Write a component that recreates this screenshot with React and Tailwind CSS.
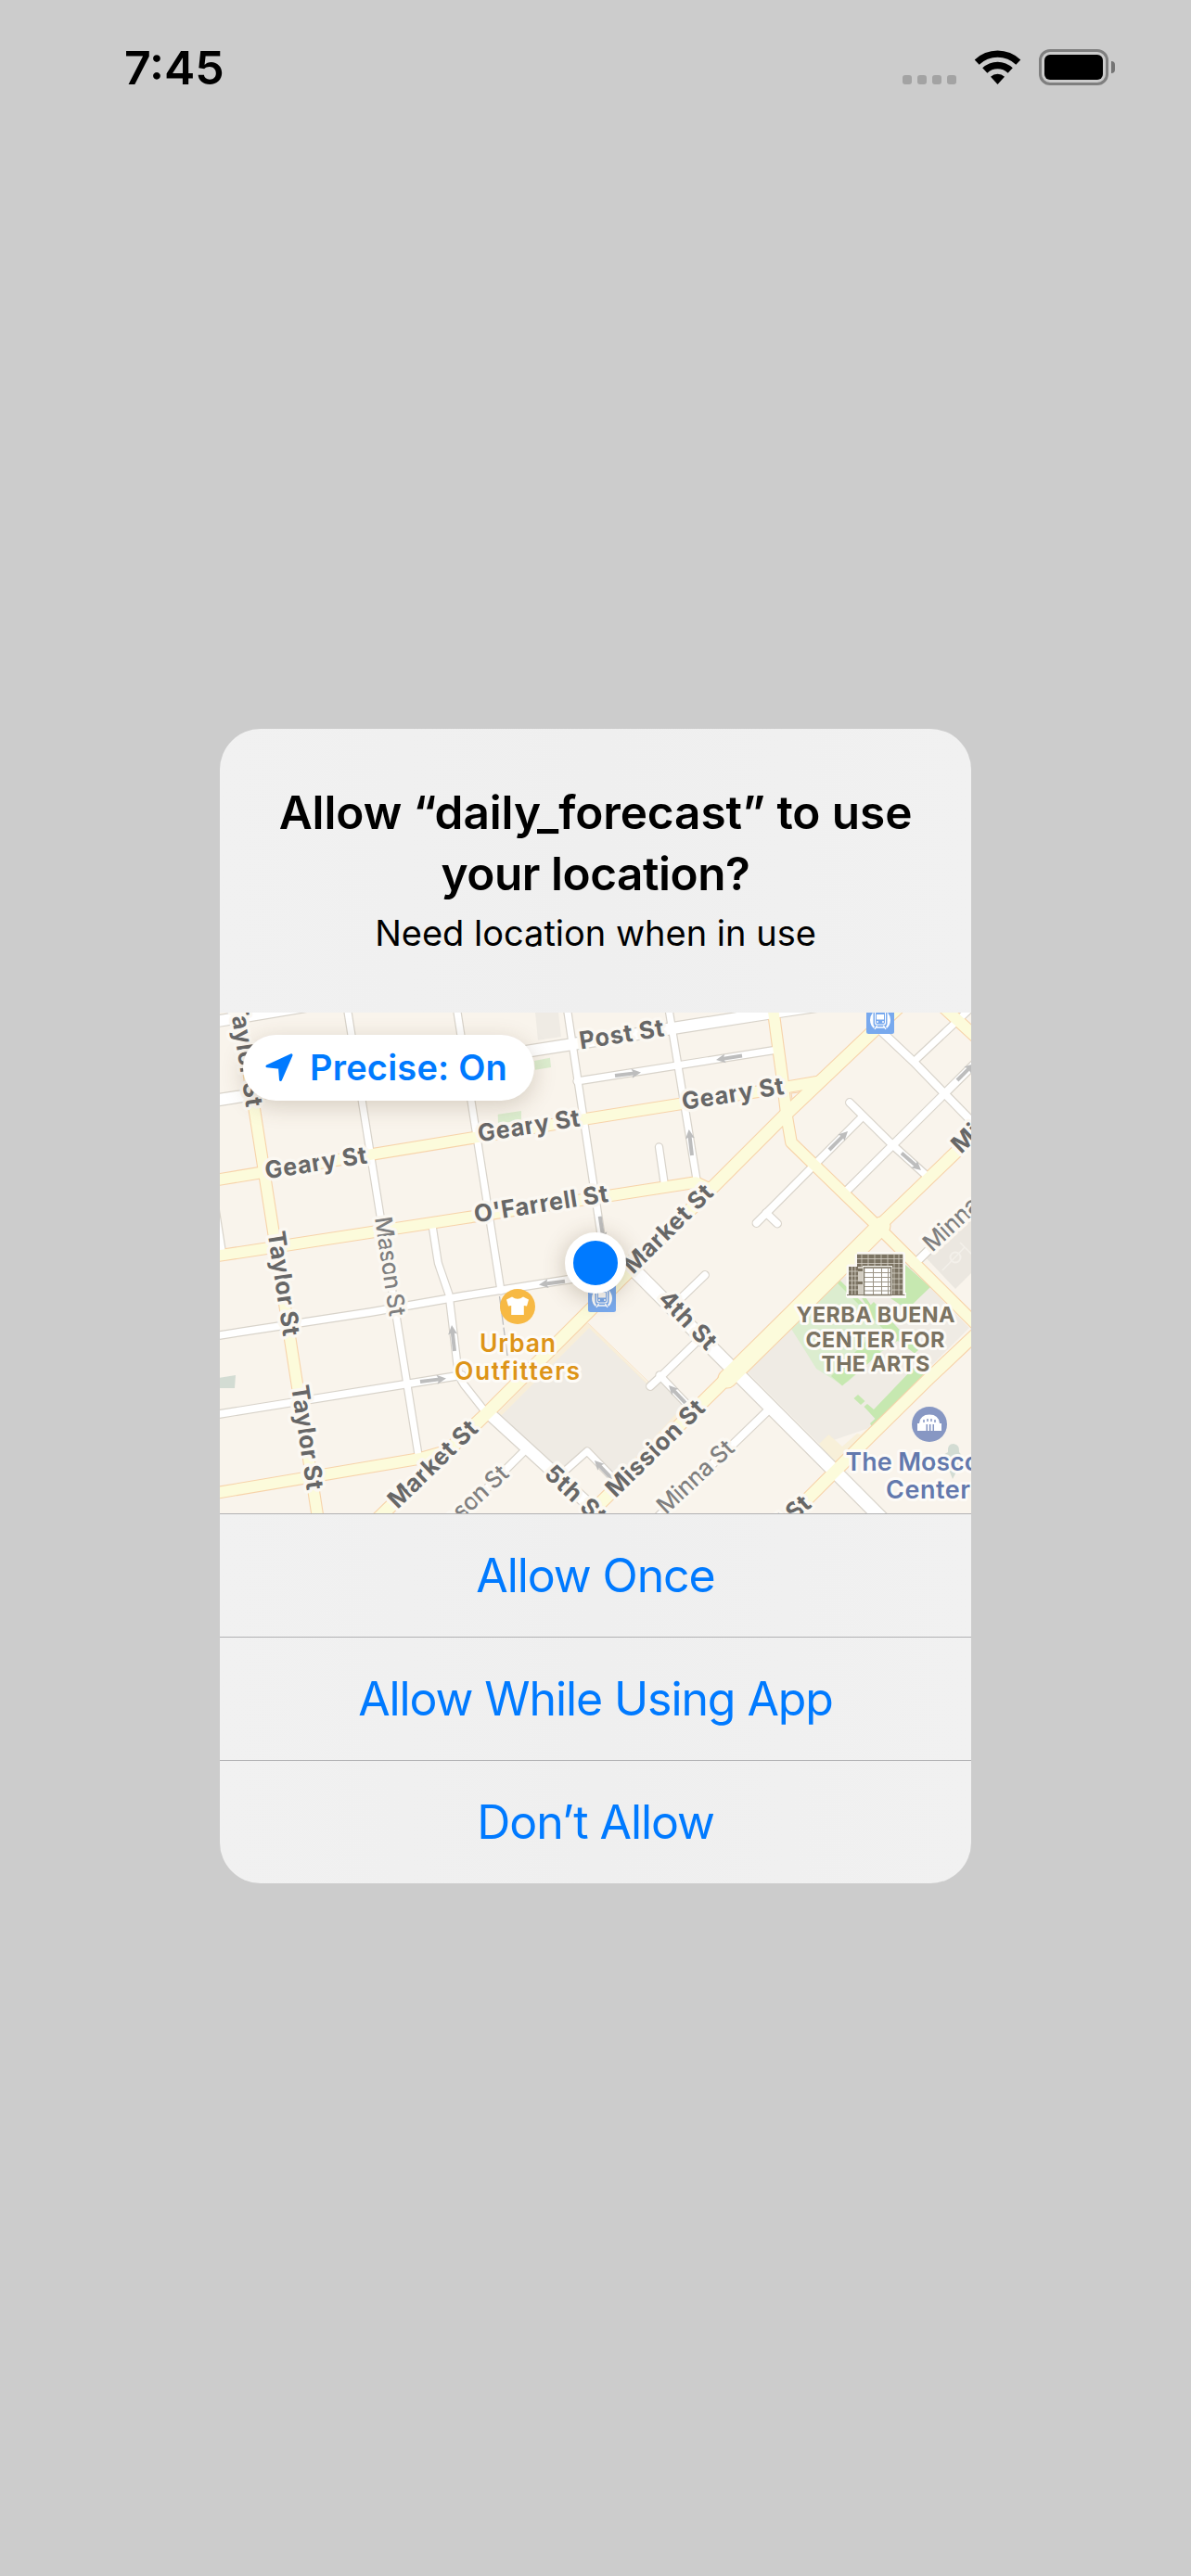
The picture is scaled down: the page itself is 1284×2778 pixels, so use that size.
const FONT = "font-['Inter','Liberation_Sans',sans-serif]";

// Road geometry: [path, fill width]
const WHITE_ROADS = [
  ["M230 1102 L340 1083.5", 11.5],
  ["M230 1187 L846 1090 L900 1082", 12],
  ["M374 1085 L451.5 1572", 7],
  ["M492 1085 L540 1392", 7],
  ["M465.5 1318 L471.5 1357 Q472 1362 474 1367 L484 1396 L487.5 1425 L493 1472 Q494 1485 500 1493 L526 1526", 7],
  ["M528 1525 L656 1642", 12.5],
  ["M611 1085 L624 1172 L650 1345 L655 1372", 7],
  ["M720.5 1085 L751 1272", 7],
  ["M622 1166 L838 1132", 7],
  ["M230 1441 L400 1415 L500 1397.5 L650 1374", 7.5],
  ["M230 1526 L498 1483", 7.5],
  ["M230 1290 L240 1354", 7],
  ["M710.5 1237 L716 1275", 7],
  ["M948 1110 L985 1145 L1054 1216", 8],
  ["M985 1145 L1050 1084", 7],
  ["M911 1286 L1054 1144", 8],
  ["M916 1189 L962.5 1235 L999 1268", 7.5],
  ["M930 1204 L815.5 1319", 7.5],
  ["M826 1308 L838 1319.5", 7.5],
  ["M675 1361 L955 1642", 14],
  ["M760 1375 L731 1403", 7.5],
  ["M749 1449 L714 1483 L701 1495", 7.5],
  ["M711 1483 L746 1520", 7],
  ["M606 1589 L633 1565 L664 1597", 7],
  ["M564 1566 L490 1640", 7.5],
  ["M827 1522 L705 1640", 8],
  ["M985 1364 L1054 1296", 8],
];

const YELLOW_ROADS = [
  ["M257 1085 L343.5 1642", 11.5],
  ["M230 1273 L510 1227 L633 1206.5 L850 1172 L885 1166", 11.5],
  ["M230 1355 L500 1313.5 L660 1289 L750 1275 L765 1282", 11.5],
  ["M833 1085 L843 1160 L848 1203 L853 1232 L946.7 1323 L1056 1432", 11.5],
  ["M972 1083 L846.7 1202 L527 1522 L404 1641", 13],
  ["M1056 1218 L946 1324 L905 1367", 12.5],
  ["M950 1322 L853 1419 L784 1487", 19],
  ["M790 1480 L630 1638", 13],
  ["M1056 1435 L1000 1488 L937 1550 L846 1641", 12.5],
  ["M230 1610.5 L452 1573 L480 1565", 11.5],
  ["M1017 1086 L1054 1120", 12],
];

const ARROWS = [
  [663, 1160, 691, 1156.5],
  [800, 1138.5, 772, 1143],
  [746, 1246, 742.7, 1218],
  [646.7, 1311.7, 651, 1339],
  [894, 1240, 914, 1220],
  [972, 1243.5, 993, 1262],
  [1032, 1165, 1050, 1147],
  [490, 1457, 487, 1429],
  [453, 1490, 481, 1486.5],
  [609, 1381.7, 581, 1385.5],
  [739, 1513, 721, 1494],
  [660, 1595, 641, 1575],
];

// [text, x, y, angle, length, minor, anchor]
const STREET_LABELS = [
  ["Taylor St", 247.5, 1081, 81, 115],
  ["Taylor St", 288.5, 1329, 81.5, 114],
  ["Taylor St", 314, 1495, 81.5, 114],
  ["Mason St", 404, 1313.5, 81.5, 108, true],
  ["Geary St", 287, 1271.5, -9, 111],
  ["Geary St", 516.5, 1231.5, -9, 111],
  ["Geary St", 736.5, 1197, -9, 111],
  ["Post St", 626, 1131.5, -9, 92],
  ["O'Farrell St", 512.5, 1318.5, -9, 146],
  ["Market St", 682.5, 1375, -44.7, 124],
  ["Market St", 428.5, 1628, -44, 123],
  ["4th St", 708.5, 1402, 46, 77],
  ["5th St", 585.5, 1591, 43, 80],
  ["Mission St", 663.5, 1616, -44.3, 137],
  ["Mission St", 1036, 1245, -44, 137],
  ["Minna St", 718, 1634, -43, 103, true],
  ["Minna St", 1005, 1351, -43, 103, true],
  ["Stevenson St", 550, 1591, -43, 150, true, "end"],
  ["Howard St", 876, 1624, -42, 126, false, "end"],
];

const PLACE_LABELS = [
  ["Urban", 558, 1457.5, 82, 26.5, "#dd9417", 600],
  ["Outfitters", 557.5, 1488, 135, 26.5, "#dd9417", 600],
  ["YERBA BUENA", 944, 1425.7, 171, 23.5, "#7b7362", 700],
  ["CENTER FOR", 943.5, 1452.5, 150, 23.5, "#7b7362", 700],
  ["THE ARTS", 944, 1479, 117, 23.5, "#7b7362", 700],
  ["The Moscone", 1000, 1585.5, 177, 27, "#6379ad", 600],
  ["Center", 1000.5, 1616, 91, 27, "#6379ad", 600],
];

function Roads({ roads, extra, color }) {
  return roads.map(([d, w], i) => (
    <path key={i} d={d} fill="none" stroke={color} strokeWidth={w + extra} strokeLinecap="round" strokeLinejoin="round" />
  ));
}

function Arrow({ points: [x1, y1, x2, y2] }) {
  const angle = (Math.atan2(y2 - y1, x2 - x1) * 180) / Math.PI;
  const length = Math.hypot(x2 - x1, y2 - y1);
  return (
    <g transform={`translate(${x1} ${y1}) rotate(${angle})`} fill="#bdbdbd">
      <rect x="0" y="-2" width={length - 7} height="4" />
      <path d={`M${length} 0 L${length - 10} -5 L${length - 8} 0 L${length - 10} 5 Z`} />
    </g>
  );
}

function TransitIcon({ x, y }) {
  return (
    <g transform={`translate(${x} ${y})`}>
      <rect width="30" height="30" rx="2.5" fill="#78a9ee" />
      <path d="M9.500 4.500 Q4 9 4 15 Q4 21 9.500 25.500 H20.500 Q26 21 26 15 Q26 9 20.500 4.500 Z" fill="#fff" />
      <path d="M11.500 3.500 H18.500 Q22.500 4 22.500 8 V19 Q22.500 21 21 22 L23.500 27 H6.500 L9 22 Q7.500 21 7.500 19 V8 Q7.500 4 11.500 3.500 Z" fill="#78a9ee" />
      <rect x="9" y="5" width="12" height="15.500" rx="2.500" fill="#fff" />
      <rect x="10" y="6.200" width="10" height="13.200" rx="1.800" fill="#78a9ee" />
      <rect x="11" y="9" width="8" height="5.500" fill="#fff" />
      <circle cx="12" cy="17" r="1" fill="#fff" />
      <circle cx="18" cy="17" r="1" fill="#fff" />
      <path d="M11.500 21 L9 25 M18.500 21 L21 25 M10.500 23 H19.500" stroke="#fff" strokeWidth="1.400" />
    </g>
  );
}

function Building() {
  return (
    <g>
      <path d="M924 1352.500 H973.500 V1396.500 H977 M924 1352.500 V1366 H915 V1396.500 H912" fill="none" stroke="#fbf9f5" strokeWidth="5" strokeLinejoin="round" />
      <rect x="913" y="1396" width="64" height="4" fill="#fbf9f5" />
      <rect x="924" y="1352.700" width="49.300" height="44" fill="#7b7362" />
      <rect x="915" y="1366" width="10" height="30.500" fill="#7b7362" />
      <path d="M924 1357.500 H973 M924 1362.500 H973 M962 1367.500 H973 M962 1373 H973 M962 1379 H973 M962 1385 H973 M962 1391 H973 M929 1353 V1366 M936 1353 V1366 M943 1353 V1366 M950 1353 V1366 M957 1353 V1366 M964 1353 V1396 M969 1353 V1396 M915 1371 H925 M915 1376 H925 M915 1381 H925 M915 1386 H925 M915 1391 H925 M918.500 1366 V1396 M922 1366 V1396" stroke="#d5d0c5" strokeWidth="0.800" fill="none" />
      <rect x="925" y="1366" width="6" height="30.500" fill="#d2cdc2" />
      <rect x="925" y="1368" width="5" height="3" fill="#7b7362" />
      <rect x="925" y="1382" width="5" height="3" fill="#7b7362" />
      <rect x="930" y="1365" width="32" height="31.500" fill="#f6f4ef" />
      <rect x="931.500" y="1367" width="29" height="29.500" fill="#fff" stroke="#7b7362" strokeWidth="1.500" />
      <path d="M932 1372.500 H960 M932 1377.500 H960 M932 1382.500 H960 M932 1387.500 H960 M932 1392 H960 M941.500 1367 V1396 M950.500 1367 V1396 M957.500 1367 V1396" stroke="#9b9486" strokeWidth="1" fill="none" />
      <rect x="913" y="1396" width="62.500" height="1" fill="#7b7362" />
    </g>
  );
}

function StreetMap() {
  return (
    <svg className={`block h-full w-full ${FONT}`} viewBox="237 1092 810 540">
      <rect x="237" y="1092" width="810" height="540" fill="#f9f4ec" />

      {/* Blocks, buildings and parks */}
      <path d="M577 1092 H602 L605 1118 L580 1121.700 Z" fill="#efebe4" />
      <path d="M576 1144 L593 1140.700 L594 1151 L577 1153.700 Z M536.700 1201.700 L562 1198 V1208.500 L537 1211.500 Z" fill="#dcedcf" />
      <path d="M237 1485.700 L254 1483 L253 1497 H237 Z" fill="#d3dcd3" />
      <path d="M632 1425 L700 1493 L714 1484 L742 1515 L662 1600 L633 1563 L600 1588 L535 1526 Z" fill="#f8eed8" />
      <path d="M635 1432 L700 1495 L712 1488 L738 1515 L662 1596 L633 1568 L604 1587 L540 1527 Z" fill="#efebe4" />
      <path d="M634 1427 L701 1492" stroke="#fae3c6" strokeWidth="1" />
      <path d="M853 1430 L905 1378 L977 1362 L1045 1432 L937 1540 L884 1558 L805 1479 Z" fill="#efebe4" />
      <path d="M883 1557 L893.500 1547 L908 1560 L924 1546 L928 1547 L944 1533 L946 1538 L900 1580 Z" fill="#f8f0d9" />
      <path d="M905 1381 L985 1462 L907 1493 L880 1476 L867 1455 L853 1433 Z" fill="#dcedcf" />
      <path d="M904 1382 L954 1432 M918 1380 L945 1420" stroke="#c6e8b0" strokeWidth="4" />
      <path d="M976 1364 L1003 1388 L978 1412 L960 1400 Z" fill="#c6e8b0" />
      <path d="M934 1412 L942 1404 L990 1456 L982 1463 Z" fill="#c6e8b0" />
      <path d="M896 1484 L934 1446 L950 1458 L908 1494.500 Z" fill="#c6e8b0" />
      <path d="M950 1458 L968 1446 L1000 1470 L985 1476 L943 1518 L925 1504 L912 1492 Z" fill="#efebe4" />
      <path d="M1002 1476 L940 1538.500 L938 1535 L943.500 1530 L931.500 1517 L935 1514 L942 1520 L985 1475 Z" fill="#c6e8b0" />
      <path d="M925 1504 L932.500 1511 L928 1515 L920.500 1508 Z" fill="#c6e8b0" />
      <path d="M997 1355 L1030 1390 L1050 1370 V1306 Z" fill="#ebe7e0" />
      <path d="M1035 1340 L1050 1355 M1016 1370 L1040 1345" stroke="#f3f0ea" strokeWidth="1.500" />
      <circle cx="1030" cy="1356" r="5.500" fill="none" stroke="#f3f0ea" strokeWidth="2" />
      <path d="M1016.700 1569 L1022 1566 Q1021 1557 1028 1557 Q1035 1558 1034 1566 L1039 1572 L1027 1595 Z" fill="#d3dcd3" />
      <path d="M538.500 1398 L547 1462" stroke="#bdbdbd" strokeWidth="1.300" strokeDasharray="14 3" />

      {/* Road casings, then road surfaces */}
      <Roads roads={WHITE_ROADS} extra={2.4} color="#d8d3ca" />
      <Roads roads={YELLOW_ROADS} extra={2.2} color="#f7d3aa" />
      <Roads roads={WHITE_ROADS} extra={0} color="#ffffff" />
      <Roads roads={YELLOW_ROADS} extra={0} color="#fcfbdb" />
      <path d="M853 1179 L862 1178 L854 1185 Z" fill="#f9f4ec" stroke="#f7d3aa" strokeWidth="1" />

      {ARROWS.map((points, i) => (
        <Arrow key={i} points={points} />
      ))}

      {STREET_LABELS.map(([text, x, y, angle, length, minor, anchor], i) => (
        <text
          key={i}
          transform={`translate(${x} ${y}) rotate(${angle})`}
          textLength={length}
          textAnchor={anchor || "start"}
          fontSize={minor ? 25.5 : 26}
          fontWeight={minor ? 450 : 680}
          fill={minor ? "#7f7f7f" : "#676767"}
          stroke="#fbf8f2"
          strokeWidth="7"
          strokeLinejoin="round"
          paintOrder="stroke"
        >
          {text}
        </text>
      ))}

      <TransitIcon x={934} y={1085} />
      <TransitIcon x={634} y={1385} />

      <circle cx="558" cy="1409" r="19" fill="#f7b944" />
      <path d="M552 1398.500 Q558 1403 564 1398.500 L570 1401.500 L568 1408.500 L564.800 1408 V1418 H551.200 V1408 L548 1408.500 L546 1401.500 Z" fill="#fff" />

      <circle cx="1002" cy="1536" r="19" fill="#8797c3" />
      <path d="M989 1543 V1535 H991 Q992 1525.500 1002 1525.500 Q1012 1525.500 1013 1535 H1015 V1543 H1007 V1536 H1005.500 V1543 H1003.500 V1536 H1001.800 V1543 H1000 V1536 H998.500 V1543 Z" fill="#fff" />
      <path d="M996 1531 V1534 M1000 1530 V1533 M1004 1530 V1533 M1008 1531 V1534" stroke="#8797c3" strokeWidth="1.500" />

      <Building />

      {PLACE_LABELS.map(([text, x, y, length, size, color, weight], i) => (
        <text
          key={i}
          x={x}
          y={y}
          textLength={length}
          textAnchor="middle"
          fontSize={size}
          fontWeight={weight}
          fill={color}
          stroke="#fdfbf7"
          strokeWidth="6"
          strokeLinejoin="round"
          paintOrder="stroke"
        >
          {text}
        </text>
      ))}
    </svg>
  );
}

function StatusBar() {
  return (
    <header className="flex h-[140px] items-start justify-between pl-[134px] pr-[82px] pt-[43px]">
      <div className="text-[50px] font-semibold leading-[60px]">7:45</div>
      <div className="flex items-start pt-[10px]">
        <div className="mt-[28px] flex gap-[6px]">
          {[0, 1, 2, 3].map((i) => (
            <span key={i} className="size-[10px] rounded-[3px] bg-[#a3a3a3]" />
          ))}
        </div>
        <svg className="ml-[19px] mt-px h-[37px] w-[51px]" viewBox="0 0 51 37">
          <path d="M0.700 10.500 A35.500 35.500 0 0 1 50.300 10.500 L45.300 15.800 A28.300 28.300 0 0 0 5.700 15.800 Z" />
          <path d="M9.200 19.300 A23.500 23.500 0 0 1 41.800 19.300 L36.600 24.700 A16 16 0 0 0 14.400 24.700 Z" />
          <path d="M18 28.800 A10.800 10.800 0 0 1 33 28.800 L25.500 37 Z" />
        </svg>
        <div className="ml-[19px] flex items-center">
          <div className="h-[39px] w-[75px] rounded-[12px] border-[3px] border-[#7f7f7f] p-[3px]">
            <div className="h-full rounded-[6px] bg-black" />
          </div>
          <div className="ml-[3px] h-[13px] w-[4px] rounded-r-full bg-[#747474]" />
        </div>
      </div>
    </header>
  );
}

function AlertButton({ children }) {
  return (
    <button className="h-[133px] w-full border-t border-[#b1b1b3] text-[50px] leading-[60px] tracking-[-1.1px] text-[#007aff]">
      {children}
    </button>
  );
}

export default function App() {
  return (
    <div className={`flex h-[2778px] w-[1284px] flex-col overflow-hidden bg-[#cccccc] text-black ${FONT}`}>
      <StatusBar />
      <main className="mx-auto mt-[646px] flex h-[1245px] w-[810px] flex-col overflow-hidden rounded-[44px] bg-linear-to-r from-[#f1f1f1] via-[#efefef] to-[#f1f1f1]">
        <div className="h-[306px] pt-[57px] text-center">
          <h1 className="text-[49.5px] font-semibold leading-[66px]">
            <span className="block tracking-[-0.08px]">Allow “daily_forecast” to use</span>
            <span className="block tracking-[-0.45px]">your location?</span>
          </h1>
          <p className="mt-[4px] text-[38px] leading-[54px]">Need location when in use</p>
        </div>

        <div className="relative h-[540px]">
          <StreetMap />
          <div className="absolute left-[25px] top-[24px] flex h-[71px] w-[314px] items-center rounded-full bg-white pl-[24px] text-[#007aff] shadow-[0_6px_24px_rgba(90,70,40,0.22)]">
            <svg className="h-[31px] w-[31px]" viewBox="0 0 31 31">
              <path d="M2 13.800 L28 1.800 L16.500 28.500 L15.500 15.200 Z" fill="currentColor" stroke="currentColor" strokeWidth="3" strokeLinejoin="round" />
            </svg>
            <span className="-mt-[2px] ml-[17px] whitespace-nowrap text-[38px] font-semibold leading-[48px] tracking-[0.2px]">Precise: On</span>
          </div>
          <div className="absolute left-[372px] top-[237px] size-[66px] rounded-full border-[9px] border-white bg-[#007aff] shadow-[0_4px_24px_rgba(90,70,40,0.3)]" />
        </div>

        <AlertButton>Allow Once</AlertButton>
        <AlertButton>Allow While Using App</AlertButton>
        <AlertButton>Don’t Allow</AlertButton>
      </main>
    </div>
  );
}
